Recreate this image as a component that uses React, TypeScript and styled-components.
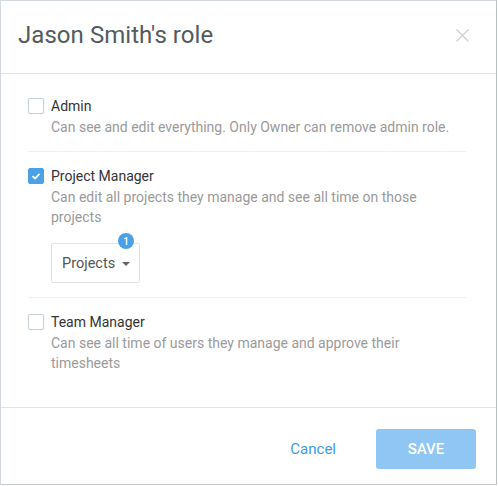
import React from "react";
import styled, { createGlobalStyle } from "styled-components";

const Global = createGlobalStyle`
  html, body { margin: 0; padding: 0; background: #fff; }
  body { font-family: Roboto, "Liberation Sans", Arial, sans-serif; -webkit-font-smoothing: antialiased; }
  * { box-sizing: border-box; }
`;

const Dialog = styled.div`
  width: 497px;
  height: 485px;
  background: #fff;
  border: 1px solid #d3d9de;
  border-right-color: #b9c0c6;
  border-bottom-color: #c3c9ce;
  display: flex;
  flex-direction: column;
`;

const Header = styled.div`
  height: 73px;
  border-bottom: 1px solid #dfe5ea;
  display: flex;
  align-items: center;
  justify-content: space-between;
  padding: 0 27px 0 17px;
  flex-shrink: 0;
`;

const Title = styled.h1`
  margin: 0;
  font-size: 24px;
  font-weight: 400;
  color: #555a5e;
  letter-spacing: 0.05px;
  position: relative;
  top: -2px;
`;

const Close = styled.button`
  border: none;
  background: none;
  padding: 0;
  width: 13px;
  height: 13px;
  display: flex;
  cursor: pointer;
  position: relative;
  top: -2px;
`;

const Body = styled.div`
  flex: 1;
  padding: 16px 30px 0 27px;
  border-bottom: 1px solid #dfe5ea;
`;

const Role = styled.div<{ $last?: boolean }>`
  display: flex;
  gap: 7px;
  padding: 7px 0 ${(p) => (p.$last ? "0" : "14px")};
  border-bottom: ${(p) => (p.$last ? "none" : "1px solid #edf1f4")};
  & + & { padding-top: 15px; }
`;

const Box = styled.span<{ $checked?: boolean }>`
  width: 16px;
  height: 16px;
  flex-shrink: 0;
  margin-top: 1px;
  border-radius: 2px;
  border: 1px solid ${(p) => (p.$checked ? "#4aa1e8" : "#c9d1d8")};
  background: ${(p) => (p.$checked ? "#4aa1e8" : "#fff")};
  box-shadow: ${(p) => (p.$checked ? "none" : "0 0 1px rgba(90,110,130,0.25)")};
  display: flex;
  align-items: center;
  justify-content: center;
`;

const Texts = styled.div`
  display: flex;
  flex-direction: column;
`;

const Label = styled.div`
  font-size: 14px;
  line-height: 18px;
  color: #333;
`;

const Desc = styled.div`
  font-size: 14px;
  line-height: 20px;
  color: #9a9a9a;
  margin-top: 2px;
`;

const DropWrap = styled.div`
  position: relative;
  margin-top: 16px;
  align-self: flex-start;
`;

const Dropdown = styled.button`
  width: 89px;
  height: 40px;
  border: 1px solid #dde3e8;
  border-radius: 2px;
  background: #fff;
  font-family: inherit;
  font-size: 14.5px;
  color: #555;
  display: flex;
  align-items: center;
  gap: 7px;
  padding: 0 0 0 10px;
  cursor: pointer;
`;

const Caret = styled.span`
  width: 0;
  height: 0;
  border-left: 4px solid transparent;
  border-right: 4px solid transparent;
  border-top: 4px solid #666;
  margin-top: 1px;
`;

const Badge = styled.span`
  position: absolute;
  top: -10px;
  left: 67px;
  width: 16px;
  height: 16px;
  border-radius: 50%;
  background: #4aa1e8;
  color: #fff;
  font-size: 10px;
  font-weight: 500;
  display: flex;
  align-items: center;
  justify-content: center;
`;

const Footer = styled.div`
  height: 76px;
  flex-shrink: 0;
  display: flex;
  align-items: flex-start;
  justify-content: flex-end;
  padding: 21px 20px 0 0;
  gap: 40px;
`;

const CancelBtn = styled.button`
  border: none;
  background: none;
  font-family: inherit;
  font-size: 15px;
  color: #3f9be6;
  padding: 0;
  height: 40px;
  cursor: pointer;
`;

const SaveBtn = styled.button`
  width: 100px;
  height: 40px;
  border: none;
  border-radius: 3px;
  background: #8fc6f3;
  color: #fff;
  font-family: inherit;
  font-size: 15px;
  font-weight: 500;
  cursor: pointer;
`;

const Check = () => (
  <svg width="10" height="8" viewBox="0 0 10 8">
    <path d="M1.5 4.2 L4 6.5 L8.5 1.8" fill="none" stroke="#fff" strokeWidth="1.8" />
  </svg>
);

export default function App() {
  return (
    <>
      <Global />
      <Dialog>
        <Header>
          <Title>Jason Smith's role</Title>
          <Close aria-label="close">
            <svg width="13" height="13" viewBox="0 0 13 13">
              <path d="M0.5 0.5 L12.5 12.5 M12.5 0.5 L0.5 12.5" stroke="#cfcfcf" strokeWidth="1.2" />
            </svg>
          </Close>
        </Header>
        <Body>
          <Role>
            <Box />
            <Texts>
              <Label>Admin</Label>
              <Desc>Can see and edit everything. Only Owner can remove admin role.</Desc>
            </Texts>
          </Role>
          <Role>
            <Box $checked>
              <Check />
            </Box>
            <Texts>
              <Label>Project Manager</Label>
              <Desc>Can edit all projects they manage and see all time on those projects</Desc>
              <DropWrap>
                <Dropdown>
                  Projects <Caret />
                </Dropdown>
                <Badge>1</Badge>
              </DropWrap>
            </Texts>
          </Role>
          <Role $last>
            <Box />
            <Texts>
              <Label>Team Manager</Label>
              <Desc>Can see all time of users they manage and approve their timesheets</Desc>
            </Texts>
          </Role>
        </Body>
        <Footer>
          <CancelBtn>Cancel</CancelBtn>
          <SaveBtn>SAVE</SaveBtn>
        </Footer>
      </Dialog>
    </>
  );
}
